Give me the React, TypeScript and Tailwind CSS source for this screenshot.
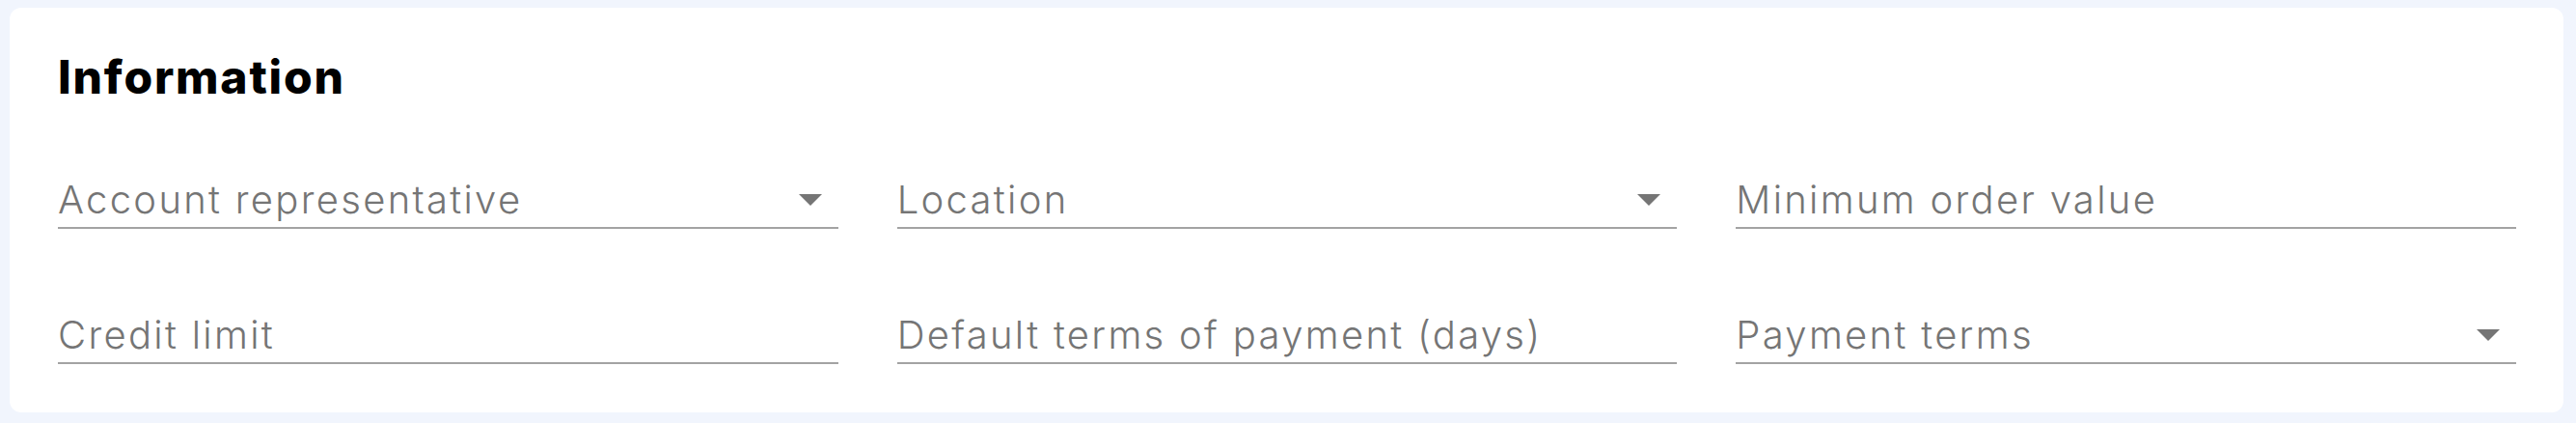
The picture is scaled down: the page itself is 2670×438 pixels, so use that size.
import React from "react";

function Caret() {
  return (
    <svg width="24" height="12" viewBox="0 0 24 12" className="shrink-0 mr-[17px]">
      <polygon points="0,0 24,0 12,12" fill="#757575" />
    </svg>
  );
}

function Field({ label, select }: { label: string; select?: boolean }) {
  return (
    <div className="flex items-center justify-between border-b-2 border-[#a3a3a3] pb-[8px]">
      <span
        className="text-[40px] leading-[40px] font-light tracking-[2.3px] text-[#757575] whitespace-nowrap"
        style={{ fontFamily: "Inter, 'Noto Sans', sans-serif" }}
      >
        {label}
      </span>
      {select && <Caret />}
    </div>
  );
}

export default function App() {
  return (
    <div className="h-[438px] w-[2670px] bg-[#f1f5fd] pt-[8px] pl-[10px] pr-[13px] pb-[11px]">
      <div className="h-full bg-white rounded-[12px] pl-[50px] pr-[49px] pt-[48px]">
        <h2
          className="text-[48px] leading-[48px] font-extrabold tracking-[1.8px] text-black m-0"
          style={{ fontFamily: "Inter, 'Noto Sans', sans-serif" }}
        >
          Information
        </h2>
        <div className="grid grid-cols-3 gap-x-[61px] gap-y-[90px] mt-[83px]">
          <Field label="Account representative" select />
          <Field label="Location" select />
          <Field label="Minimum order value" />
          <Field label="Credit limit" />
          <Field label="Default terms of payment (days)" />
          <Field label="Payment terms" select />
        </div>
      </div>
    </div>
  );
}
